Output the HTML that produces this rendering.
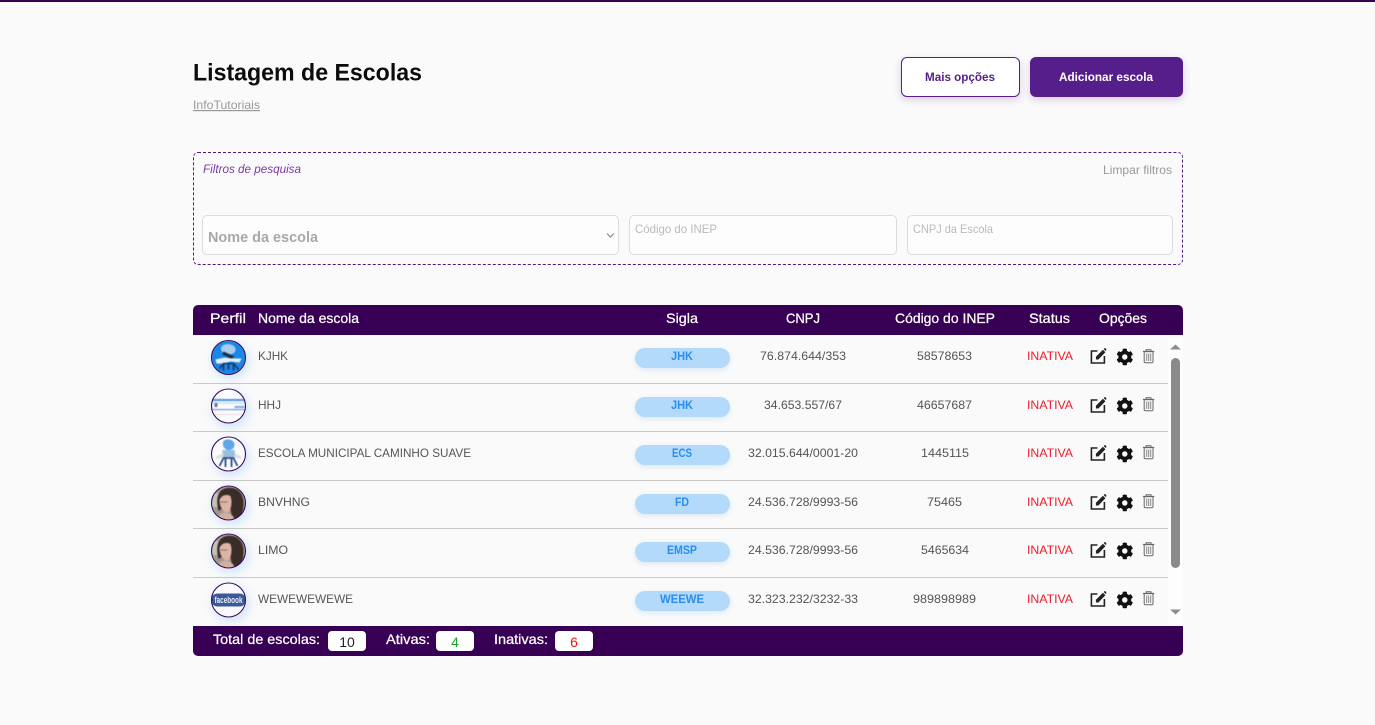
<!DOCTYPE html>
<html lang="pt-BR">
<head>
<meta charset="utf-8">
<title>Listagem de Escolas</title>
<style>
html,body{margin:0;padding:0;width:1375px;height:725px;overflow:hidden;background:#fafafa;}
.b{position:absolute;box-sizing:border-box;}
svg{position:absolute;left:0;top:0;}
text{font-family:"Liberation Sans",Arial,sans-serif;}
.n{font-size:12px;fill:#555;}
.c{font-size:12px;fill:#555;text-anchor:middle;}
.s{font-size:11.5px;font-weight:bold;fill:#2a8ef0;text-anchor:middle;}
.i{font-size:12px;fill:#f01c2c;}
.h{font-size:14px;fill:#fff;stroke:#fff;stroke-width:.25px;}
.ph{font-size:12px;fill:#bbb;}
.blur{filter:blur(.45px);}
</style>
</head>
<body>
<div class="b" style="left:0;top:0;width:1375px;height:2px;background:#380055"></div>
<div class="b" style="left:901px;top:57px;width:119px;height:40px;background:#fff;border:1px solid #551e8b;border-radius:6px;box-shadow:0 3px 8px rgba(85,30,139,.2)"></div>
<div class="b" style="left:1030px;top:57px;width:153px;height:40px;background:#551e8b;border-radius:6px;box-shadow:0 3px 8px rgba(85,30,139,.2)"></div>
<div class="b" style="left:193px;top:152px;width:990px;height:113px;border:1px dashed #4f1a7f;border-radius:5px"></div>
<div class="b" style="left:202px;top:215px;width:417px;height:40px;background:#fdfdfd;border:1px solid #dcdcdc;border-radius:5px"></div>
<div class="b" style="left:629px;top:215px;width:268px;height:40px;background:#fdfdfd;border:1px solid #dcdcdc;border-radius:5px"></div>
<div class="b" style="left:907px;top:215px;width:266px;height:40px;background:#fdfdfd;border:1px solid #dcdcdc;border-radius:5px"></div>
<div class="b" style="left:193px;top:305px;width:990px;height:30px;background:#380055;border-radius:5px 5px 0 0"></div>
<div class="b" style="left:1168px;top:335px;width:15px;height:291px;background:#fdfdfd"></div>
<div class="b" style="left:1171px;top:358px;width:9px;height:210px;background:#8a8a8a;border-radius:5px"></div>
<div class="b" style="left:193px;top:383px;width:975px;height:1px;background:#c8c8c8"></div>
<div class="b" style="left:193px;top:431px;width:975px;height:1px;background:#c8c8c8"></div>
<div class="b" style="left:193px;top:480px;width:975px;height:1px;background:#c8c8c8"></div>
<div class="b" style="left:193px;top:528px;width:975px;height:1px;background:#c8c8c8"></div>
<div class="b" style="left:193px;top:577px;width:975px;height:1px;background:#c8c8c8"></div>
<div class="b" style="left:635px;top:348px;width:95px;height:20px;background:#b3d9fb;border-radius:10px;box-shadow:0 2px 6px rgba(100,170,240,.2)"></div>
<div class="b" style="left:635px;top:397px;width:95px;height:20px;background:#b3d9fb;border-radius:10px;box-shadow:0 2px 6px rgba(100,170,240,.2)"></div>
<div class="b" style="left:635px;top:445px;width:95px;height:20px;background:#b3d9fb;border-radius:10px;box-shadow:0 2px 6px rgba(100,170,240,.2)"></div>
<div class="b" style="left:635px;top:494px;width:95px;height:20px;background:#b3d9fb;border-radius:10px;box-shadow:0 2px 6px rgba(100,170,240,.2)"></div>
<div class="b" style="left:635px;top:542px;width:95px;height:20px;background:#b3d9fb;border-radius:10px;box-shadow:0 2px 6px rgba(100,170,240,.2)"></div>
<div class="b" style="left:635px;top:591px;width:95px;height:20px;background:#b3d9fb;border-radius:10px;box-shadow:0 2px 6px rgba(100,170,240,.2)"></div>
<div class="b" style="left:211px;top:340px;width:35px;height:35px;border-radius:50%;box-shadow:2px 3px 10px rgba(90,170,250,.3)"></div>
<div class="b" style="left:211px;top:389px;width:35px;height:35px;border-radius:50%;box-shadow:2px 3px 10px rgba(90,170,250,.3)"></div>
<div class="b" style="left:211px;top:437px;width:35px;height:35px;border-radius:50%;box-shadow:2px 3px 10px rgba(90,170,250,.3)"></div>
<div class="b" style="left:211px;top:486px;width:35px;height:35px;border-radius:50%;box-shadow:2px 3px 10px rgba(90,170,250,.3)"></div>
<div class="b" style="left:211px;top:534px;width:35px;height:35px;border-radius:50%;box-shadow:2px 3px 10px rgba(90,170,250,.3)"></div>
<div class="b" style="left:211px;top:583px;width:35px;height:35px;border-radius:50%;box-shadow:2px 3px 10px rgba(90,170,250,.3)"></div>
<div class="b" style="left:193px;top:626px;width:990px;height:30px;background:#380055;border-radius:0 0 5px 5px"></div>
<div class="b" style="left:328px;top:631px;width:38px;height:20px;background:#fff;border-radius:4px"></div>
<div class="b" style="left:436px;top:631px;width:38px;height:20px;background:#fff;border-radius:4px"></div>
<div class="b" style="left:555px;top:631px;width:38px;height:20px;background:#fff;border-radius:4px"></div>

<svg width="1375" height="725" viewBox="0 0 1375 725" xmlns="http://www.w3.org/2000/svg">
<defs>
<clipPath id="av"><circle cx="0" cy="0" r="17"/></clipPath>
<g id="edit" transform="translate(-.6 -1)">
<path d="M1098 352H1092V364H1105V357" fill="none" stroke="#222" stroke-width="1.600"/>
<path d="M1096.500 360.500V357.800L1103.500 350.800L1106 353.300L1099 360.500Z" fill="#222"/>
<path d="M1104.300 350L1105 349.300Q1105.600 348.900 1106.200 349.400L1106.800 350Q1107.200 350.600 1106.800 351.200L1106.100 352Z" fill="#222"/>
</g>
<path id="gear" transform="translate(1116.200 348.400) scale(.0335)" fill="#111" fill-rule="evenodd" d="M487.400 315.700l-42.600-24.600c4.300-23.200 4.300-47 0-70.200l42.600-24.600c4.900-2.800 7.100-8.600 5.500-14-11.100-35.600-30-67.800-54.700-94.600-3.800-4.100-10-5.100-14.800-2.300L380.800 110c-17.900-15.400-38.500-27.300-60.800-35.100V25.800c0-5.600-3.900-10.500-9.400-11.700-36.700-8.200-74.300-7.800-109.200 0-5.500 1.200-9.400 6.100-9.400 11.700V75c-22.200 7.900-42.800 19.800-60.800 35.100L88.700 85.500c-4.900-2.800-11-1.900-14.800 2.300-24.700 26.700-43.600 58.900-54.700 94.600-1.700 5.400.6 11.200 5.500 14L67.300 221c-4.300 23.200-4.300 47 0 70.200l-42.600 24.600c-4.900 2.800-7.100 8.600-5.500 14 11.100 35.600 30 67.800 54.700 94.600 3.800 4.100 10 5.100 14.800 2.300l42.600-24.600c17.900 15.400 38.500 27.300 60.800 35.100v49.200c0 5.600 3.900 10.500 9.400 11.700 36.700 8.200 74.300 7.800 109.200 0 5.500-1.200 9.400-6.100 9.400-11.700v-49.200c22.200-7.900 42.800-19.800 60.800-35.100l42.600 24.600c4.900 2.800 11 1.900 14.800-2.300 24.700-26.700 43.600-58.900 54.700-94.600 1.500-5.500-.7-11.300-5.600-14.100zM256 336c-44.100 0-80-35.900-80-80s35.900-80 80-80 80 35.900 80 80-35.900 80-80 80z"/>
<g id="trash" fill="none" stroke="#666" stroke-width="1" transform="translate(-.3 0)">
<path d="M1143.300 351.500H1154.500" stroke-width="1.300"/>
<path d="M1146.500 351V349.800H1151.300V351"/>
<path d="M1144.500 352V361.500Q1144.500 362.800 1146 362.800H1152Q1153.300 362.800 1153.300 361.500V352"/>
<path d="M1147 353.500V361M1149 353.500V361M1151 353.500V361" stroke="#888"/>
</g>
<g id="photo">
<circle r="17" fill="#a09a8c"/>
<path d="M-17-10H-9V4H-17Z" fill="#c2c5b4"/>
<path d="M-10 8C-13-4-11-13-2-15C10-17 16-8 15 2C15 9 13 14 10 17L4 17L2 6L-7 6Z" fill="#3a2c27"/>
<path d="M-9-3C-8-9-2-10 2-7C4-2 3 6 0 9C-4 11-9 5-9-3Z" fill="#deb4a8"/>
<path d="M-12 17C-10 11-5 9-1 10C3 11 6 14 6 17Z" fill="#d4aea4"/>
<path d="M-9-3C-7-8-2-9 2-7L4 1L6-8L-2-12L-9-8Z" fill="#3a2c27"/>
<path d="M-8-1H-1" stroke="#7a5a55" stroke-width=".8"/>
</g>
</defs>

<text x="193" y="80.500" font-size="24" font-weight="bold" fill="#0c0c0c" textLength="229" lengthAdjust="spacingAndGlyphs">Listagem de Escolas</text>
<text x="193" y="109" font-size="12" fill="#999" text-decoration="underline" textLength="67" lengthAdjust="spacingAndGlyphs">InfoTutoriais</text>
<text x="925" y="81" font-size="11.500" font-weight="bold" fill="#551e8b" textLength="70" lengthAdjust="spacingAndGlyphs">Mais opções</text>
<text x="1059" y="81" font-size="11.500" font-weight="bold" fill="#fff" textLength="94" lengthAdjust="spacingAndGlyphs">Adicionar escola</text>
<text x="203" y="173" font-size="12" font-style="italic" fill="#7a3aa0" textLength="98" lengthAdjust="spacingAndGlyphs">Filtros de pesquisa</text>
<text x="1103" y="174" font-size="12" fill="#999" textLength="69" lengthAdjust="spacingAndGlyphs">Limpar filtros</text>
<text x="208" y="242" font-size="15" font-weight="bold" fill="#a8a8a8" textLength="110" lengthAdjust="spacingAndGlyphs">Nome da escola</text>
<path d="M607 233.500L610.500 237L614 233.500" fill="none" stroke="#888" stroke-width="1.200"/>
<text class="ph" x="635" y="233" textLength="82" lengthAdjust="spacingAndGlyphs">Código do INEP</text>
<text class="ph" x="913" y="233" textLength="80" lengthAdjust="spacingAndGlyphs">CNPJ da Escola</text>

<text class="h" x="210" y="323" textLength="36" lengthAdjust="spacingAndGlyphs">Perfil</text>
<text class="h" x="258" y="323" textLength="101" lengthAdjust="spacingAndGlyphs">Nome da escola</text>
<text class="h" x="666" y="323" textLength="32" lengthAdjust="spacingAndGlyphs">Sigla</text>
<text class="h" x="786" y="323" textLength="34" lengthAdjust="spacingAndGlyphs">CNPJ</text>
<text class="h" x="895" y="323" textLength="100" lengthAdjust="spacingAndGlyphs">Código do INEP</text>
<text class="h" x="1029" y="323" textLength="41" lengthAdjust="spacingAndGlyphs">Status</text>
<text class="h" x="1099" y="323" textLength="48" lengthAdjust="spacingAndGlyphs">Opções</text>

<path d="M1170 349.500L1175.500 344.500L1181 349.500Z" fill="#8f8f8f"/>
<path d="M1170 609.500L1175.500 614.500L1181 609.500Z" fill="#8f8f8f"/>

<!-- avatars -->
<g transform="translate(228.500 357.500)"><g clip-path="url(#av)"><g class="blur">
<circle r="17" fill="#1a86e8"/>
<path d="M-7-11C-3-15 5-14 7-9C8-5 4-3 0-3C-5-3-9-7-7-11Z" fill="#a6cdf0"/>
<path d="M-5-6L6-1L3 1L-6-3Z" fill="#1f2a3a"/>
<path d="M-13 2L-4 0L2 1L13 1L11 5L2 4L-5 6L-12 6Z" fill="#e6f0f8"/>
<path d="M-9 11L-5 6L5 6L10 12M-5 6L-5 13M0 6L0 12M5 6L5 13" fill="none" stroke="#1c3560" stroke-width="1.600"/>
</g></g><circle r="17" fill="none" stroke="#380a5f" stroke-width="1.100"/></g>

<g transform="translate(228.500 406)"><g clip-path="url(#av)"><g class="blur">
<circle r="17" fill="#fafbfd"/>
<path d="M-17-7L15-7L16-5L-17-5Z" fill="#4a96e4"/>
<rect x="-17" y="-4" width="33" height="2" fill="#d6e6f6"/>
<rect x="-14" y="-3" width="3" height="4" fill="#778"/>
<rect x="6" y="0" width="10" height="2" fill="#7aa8e4"/>
<rect x="-17" y="3" width="34" height="1.200" fill="#7a98dc"/>
<rect x="-15" y="8" width="30" height="1" fill="#f2d6dc"/>
</g></g><circle r="17" fill="none" stroke="#380a5f" stroke-width="1.100"/></g>

<g transform="translate(228.500 454)"><g clip-path="url(#av)"><g class="blur">
<circle r="17" fill="#fbfbfc"/>
<path d="M-5-13C-2-16 5-15 6-10C6-6 4-4 0-4C-4-4-7-9-5-13Z" fill="#5fa6e4"/>
<path d="M-6-4L6-4L7 3L-6 3Z" fill="#9abfde"/>
<path d="M-13 3L-5-1L-5 3L-12 5ZM13 3L6-1L6 3L12 5Z" fill="#d6dde4"/>
<path d="M-9 12L-5 4L5 4L9 12M-3 4L-3 13M3 4L3 13" fill="none" stroke="#2b4c86" stroke-width="1.800"/>
</g></g><circle r="17" fill="none" stroke="#380a5f" stroke-width="1.100"/></g>

<g transform="translate(228.500 503)"><g clip-path="url(#av)"><g class="blur"><use href="#photo"/></g></g><circle r="17" fill="none" stroke="#380a5f" stroke-width="1.100"/></g>
<g transform="translate(228.500 551)"><g clip-path="url(#av)"><g class="blur"><use href="#photo"/></g></g><circle r="17" fill="none" stroke="#380a5f" stroke-width="1.100"/></g>

<g transform="translate(228.500 600)"><g clip-path="url(#av)">
<circle r="17" fill="#fafafc"/>
<rect x="-17.500" y="-6.500" width="35" height="13" rx="6.500" fill="#3b5998"/>
<text x="0" y="3" font-size="9" font-weight="bold" fill="#e8edf6" text-anchor="middle" textLength="28" lengthAdjust="spacingAndGlyphs">facebook</text>
</g><circle r="17" fill="none" stroke="#380a5f" stroke-width="1.100"/></g>

<!-- row 1 -->
<text class="n" x="258" y="360" textLength="30" lengthAdjust="spacingAndGlyphs">KJHK</text>
<text class="s" x="682" y="360" textLength="22" lengthAdjust="spacingAndGlyphs">JHK</text>
<text class="c" x="803" y="360" textLength="86" lengthAdjust="spacingAndGlyphs">76.874.644/353</text>
<text class="c" x="944.500" y="360" textLength="55" lengthAdjust="spacingAndGlyphs">58578653</text>
<text class="i" x="1027" y="360" textLength="46" lengthAdjust="spacingAndGlyphs">INATIVA</text>
<use href="#edit"/><use href="#gear"/><use href="#trash"/>
<!-- row 2 -->
<text class="n" x="258" y="409" textLength="23" lengthAdjust="spacingAndGlyphs">HHJ</text>
<text class="s" x="682" y="409" textLength="22" lengthAdjust="spacingAndGlyphs">JHK</text>
<text class="c" x="803" y="409" textLength="78" lengthAdjust="spacingAndGlyphs">34.653.557/67</text>
<text class="c" x="944.500" y="409" textLength="55" lengthAdjust="spacingAndGlyphs">46657687</text>
<text class="i" x="1027" y="409" textLength="46" lengthAdjust="spacingAndGlyphs">INATIVA</text>
<use href="#edit" y="49"/><use href="#gear" transform="translate(0 49)"/><use href="#trash" y="48"/>
<!-- row 3 -->
<text class="n" x="258" y="457" textLength="213" lengthAdjust="spacingAndGlyphs">ESCOLA MUNICIPAL CAMINHO SUAVE</text>
<text class="s" x="682" y="457" textLength="20" lengthAdjust="spacingAndGlyphs">ECS</text>
<text class="c" x="803" y="457" textLength="110" lengthAdjust="spacingAndGlyphs">32.015.644/0001-20</text>
<text class="c" x="945" y="457" textLength="48" lengthAdjust="spacingAndGlyphs">1445115</text>
<text class="i" x="1027" y="457" textLength="46" lengthAdjust="spacingAndGlyphs">INATIVA</text>
<use href="#edit" y="97"/><use href="#gear" transform="translate(0 97)"/><use href="#trash" y="96"/>
<!-- row 4 -->
<text class="n" x="258" y="506" textLength="52" lengthAdjust="spacingAndGlyphs">BNVHNG</text>
<text class="s" x="682" y="506" textLength="14" lengthAdjust="spacingAndGlyphs">FD</text>
<text class="c" x="803" y="506" textLength="110" lengthAdjust="spacingAndGlyphs">24.536.728/9993-56</text>
<text class="c" x="944.500" y="506" textLength="35" lengthAdjust="spacingAndGlyphs">75465</text>
<text class="i" x="1027" y="506" textLength="46" lengthAdjust="spacingAndGlyphs">INATIVA</text>
<use href="#edit" y="146"/><use href="#gear" transform="translate(0 146)"/><use href="#trash" y="145"/>
<!-- row 5 -->
<text class="n" x="258" y="554" textLength="30" lengthAdjust="spacingAndGlyphs">LIMO</text>
<text class="s" x="682" y="554" textLength="30" lengthAdjust="spacingAndGlyphs">EMSP</text>
<text class="c" x="803" y="554" textLength="110" lengthAdjust="spacingAndGlyphs">24.536.728/9993-56</text>
<text class="c" x="945" y="554" textLength="48" lengthAdjust="spacingAndGlyphs">5465634</text>
<text class="i" x="1027" y="554" textLength="46" lengthAdjust="spacingAndGlyphs">INATIVA</text>
<use href="#edit" y="194"/><use href="#gear" transform="translate(0 194)"/><use href="#trash" y="193"/>
<!-- row 6 -->
<text class="n" x="258" y="603" textLength="95" lengthAdjust="spacingAndGlyphs">WEWEWEWEWE</text>
<text class="s" x="682" y="603" textLength="44" lengthAdjust="spacingAndGlyphs">WEEWE</text>
<text class="c" x="803" y="603" textLength="110" lengthAdjust="spacingAndGlyphs">32.323.232/3232-33</text>
<text class="c" x="944.500" y="603" textLength="63" lengthAdjust="spacingAndGlyphs">989898989</text>
<text class="i" x="1027" y="603" textLength="46" lengthAdjust="spacingAndGlyphs">INATIVA</text>
<use href="#edit" y="243"/><use href="#gear" transform="translate(0 243)"/><use href="#trash" y="242"/>

<!-- footer -->
<text class="h" x="213" y="644" textLength="107" lengthAdjust="spacingAndGlyphs">Total de escolas:</text>
<text x="347" y="647" font-size="14" fill="#222" text-anchor="middle">10</text>
<text class="h" x="386" y="644" textLength="44" lengthAdjust="spacingAndGlyphs">Ativas:</text>
<text x="455" y="647" font-size="14" fill="#14a52c" text-anchor="middle">4</text>
<text class="h" x="494" y="644" textLength="54" lengthAdjust="spacingAndGlyphs">Inativas:</text>
<text x="574" y="647" font-size="14" fill="#f01414" text-anchor="middle">6</text>
</svg>
</body>
</html>
